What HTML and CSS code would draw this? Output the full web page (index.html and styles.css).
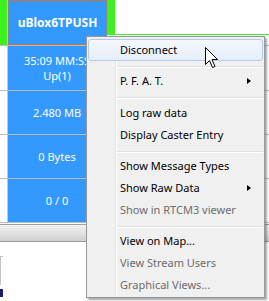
FILE: index.html
```html
<!DOCTYPE html>
<html>
<head>
  <title>Caster Streams</title>
  <link rel="stylesheet" href="styles.css">
</head>
<body>
  <div class="screen">
    <div class="grid">
      <div class="row r1">
        <div class="lead green"></div>
        <div class="cell focus"><b>uBlox6TPUSH</b></div>
        <div class="tail"><div class="strip"></div></div>
      </div>
      <div class="row r2">
        <div class="lead"></div>
        <div class="cell">35:09 MM:SS<br>Up(1)</div>
        <div class="tail"></div>
      </div>
      <div class="row r3">
        <div class="lead"></div>
        <div class="cell">2.480 MB</div>
        <div class="tail"></div>
      </div>
      <div class="row r4">
        <div class="lead"></div>
        <div class="cell">0 Bytes</div>
        <div class="tail"></div>
      </div>
      <div class="row r5">
        <div class="lead"></div>
        <div class="cell">0 / 0</div>
        <div class="tail"></div>
      </div>
    </div>
    <div class="hbar"></div>
    <div class="below">
      <div class="peek"></div>
      <div class="peek-dark"></div>
    </div>

    <div class="menu">
      <div class="item hot">Disconnect</div>
      <div class="sep"><div class="line"></div></div>
      <div class="item">P. F. A. T.<span class="arrow"></span></div>
      <div class="sep tall"><div class="line"></div></div>
      <div class="item">Log raw data</div>
      <div class="item">Display Caster Entry</div>
      <div class="sep"><div class="line"></div></div>
      <div class="item">Show Message Types</div>
      <div class="item">Show Raw Data<span class="arrow"></span></div>
      <div class="item off">Show in RTCM3 viewer</div>
      <div class="sep"><div class="line"></div></div>
      <div class="item">View on Map...</div>
      <div class="item off">View Stream Users</div>
      <div class="item off">Graphical Views...</div>
    </div>

    <svg class="cursor" width="14" height="22" viewBox="0 0 14 22">
      <path d="M0.5 0.5 L0.5 17.5 L4.5 13.5 L7.5 20.5 L10 19.5 L7 12.5 L12.5 12.5 Z" fill="#fff" stroke="#000" stroke-width="1"/>
    </svg>
  </div>
</body>
</html>
```

FILE: styles.css
```css
body {
  margin: 0;
  font-family: "Noto Sans", Arial, sans-serif;
  font-size: 11px;
}

.screen {
  position: relative;
  width: 269px;
  height: 301px;
  overflow: hidden;
  background-color: #fff;
}

.row {
  display: flex;
  border-bottom: 1px solid #bcbcbc;
  box-sizing: border-box;
}

.r1 { height: 46px; }
.r2 { height: 45px; }
.r3, .r4, .r5 { height: 44px; }

.lead {
  width: 7px;
  border-right: 1px solid #c8c8c8;
}

.lead.green {
  background-color: #3ff01f;
}

.cell {
  width: 99px;
  border-right: 1px solid #a8a8a8;
  background-color: #3399ff;
  color: #fff;
  display: flex;
  align-items: center;
  justify-content: center;
  text-align: center;
  line-height: 15px;
  box-sizing: border-box;
}

.cell b {
  font-size: 12px;
}

.cell.focus {
  border: 1px dotted #c8783c;
}

.tail {
  flex: 1;
  align-self: flex-start;
}

.r1 .tail {
  height: 35px;
  box-sizing: border-box;
  border-bottom: 1px solid #3ff01f;
}

.strip {
  width: 8px;
  height: 100%;
  background-color: #3ff01f;
}

.hbar {
  height: 18px;
  margin-top: 1px;
  box-sizing: border-box;
  border-top: 1px solid #a0a0a0;
  border-bottom: 1px solid #9a9a9a;
  background: linear-gradient(#f2f2f2, #e2e2e2 50%, #cfcfcf);
}

.below {
  padding-top: 14px;
}

.peek {
  width: 2px;
  height: 28px;
  border-left: 1px solid #c4c4c4;
  border-top: 1px solid #c4c4c4;
}

.peek-dark {
  width: 3px;
  height: 8px;
  margin-top: 4px;
  background-color: #1c1c6c;
}

/* context menu */
.menu {
  position: absolute;
  left: 86px;
  top: 36px;
  width: 179px;
  box-sizing: border-box;
  padding: 2px 1px 1px;
  border: 1px solid #979797;
  background-color: #f0f0f0;
  box-shadow: 2px 2px 2px rgba(0, 0, 0, 0.35);
}

.menu::before {
  content: "";
  position: absolute;
  left: 28px;
  top: 2px;
  bottom: 1px;
  width: 1px;
  background-color: #e2e3e3;
  border-right: 1px solid #fff;
}

.item {
  position: relative;
  height: 22px;
  line-height: 20px;
  padding-left: 31px;
  box-sizing: border-box;
  border: 1px solid transparent;
  border-radius: 3px;
  color: #000;
  white-space: nowrap;
}

.item.hot {
  z-index: 1;
  border-color: #aecbf0;
  background: linear-gradient(#f4f8fd, #e7eef8);
}

.item.off {
  color: #6d6d6d;
}

.arrow {
  position: absolute;
  right: 11px;
  top: 7px;
  width: 0;
  height: 0;
  border-left: 4px solid #000;
  border-top: 3.5px solid transparent;
  border-bottom: 3.5px solid transparent;
}

.sep {
  margin-left: 27px;
  padding: 5px 0 2px;
}

.sep.tall {
  padding-bottom: 3px;
}

.sep .line {
  height: 1px;
  background-color: #e0e0e0;
  border-bottom: 1px solid #fff;
}

.cursor {
  position: absolute;
  left: 205px;
  top: 47px;
  z-index: 2;
}
```
